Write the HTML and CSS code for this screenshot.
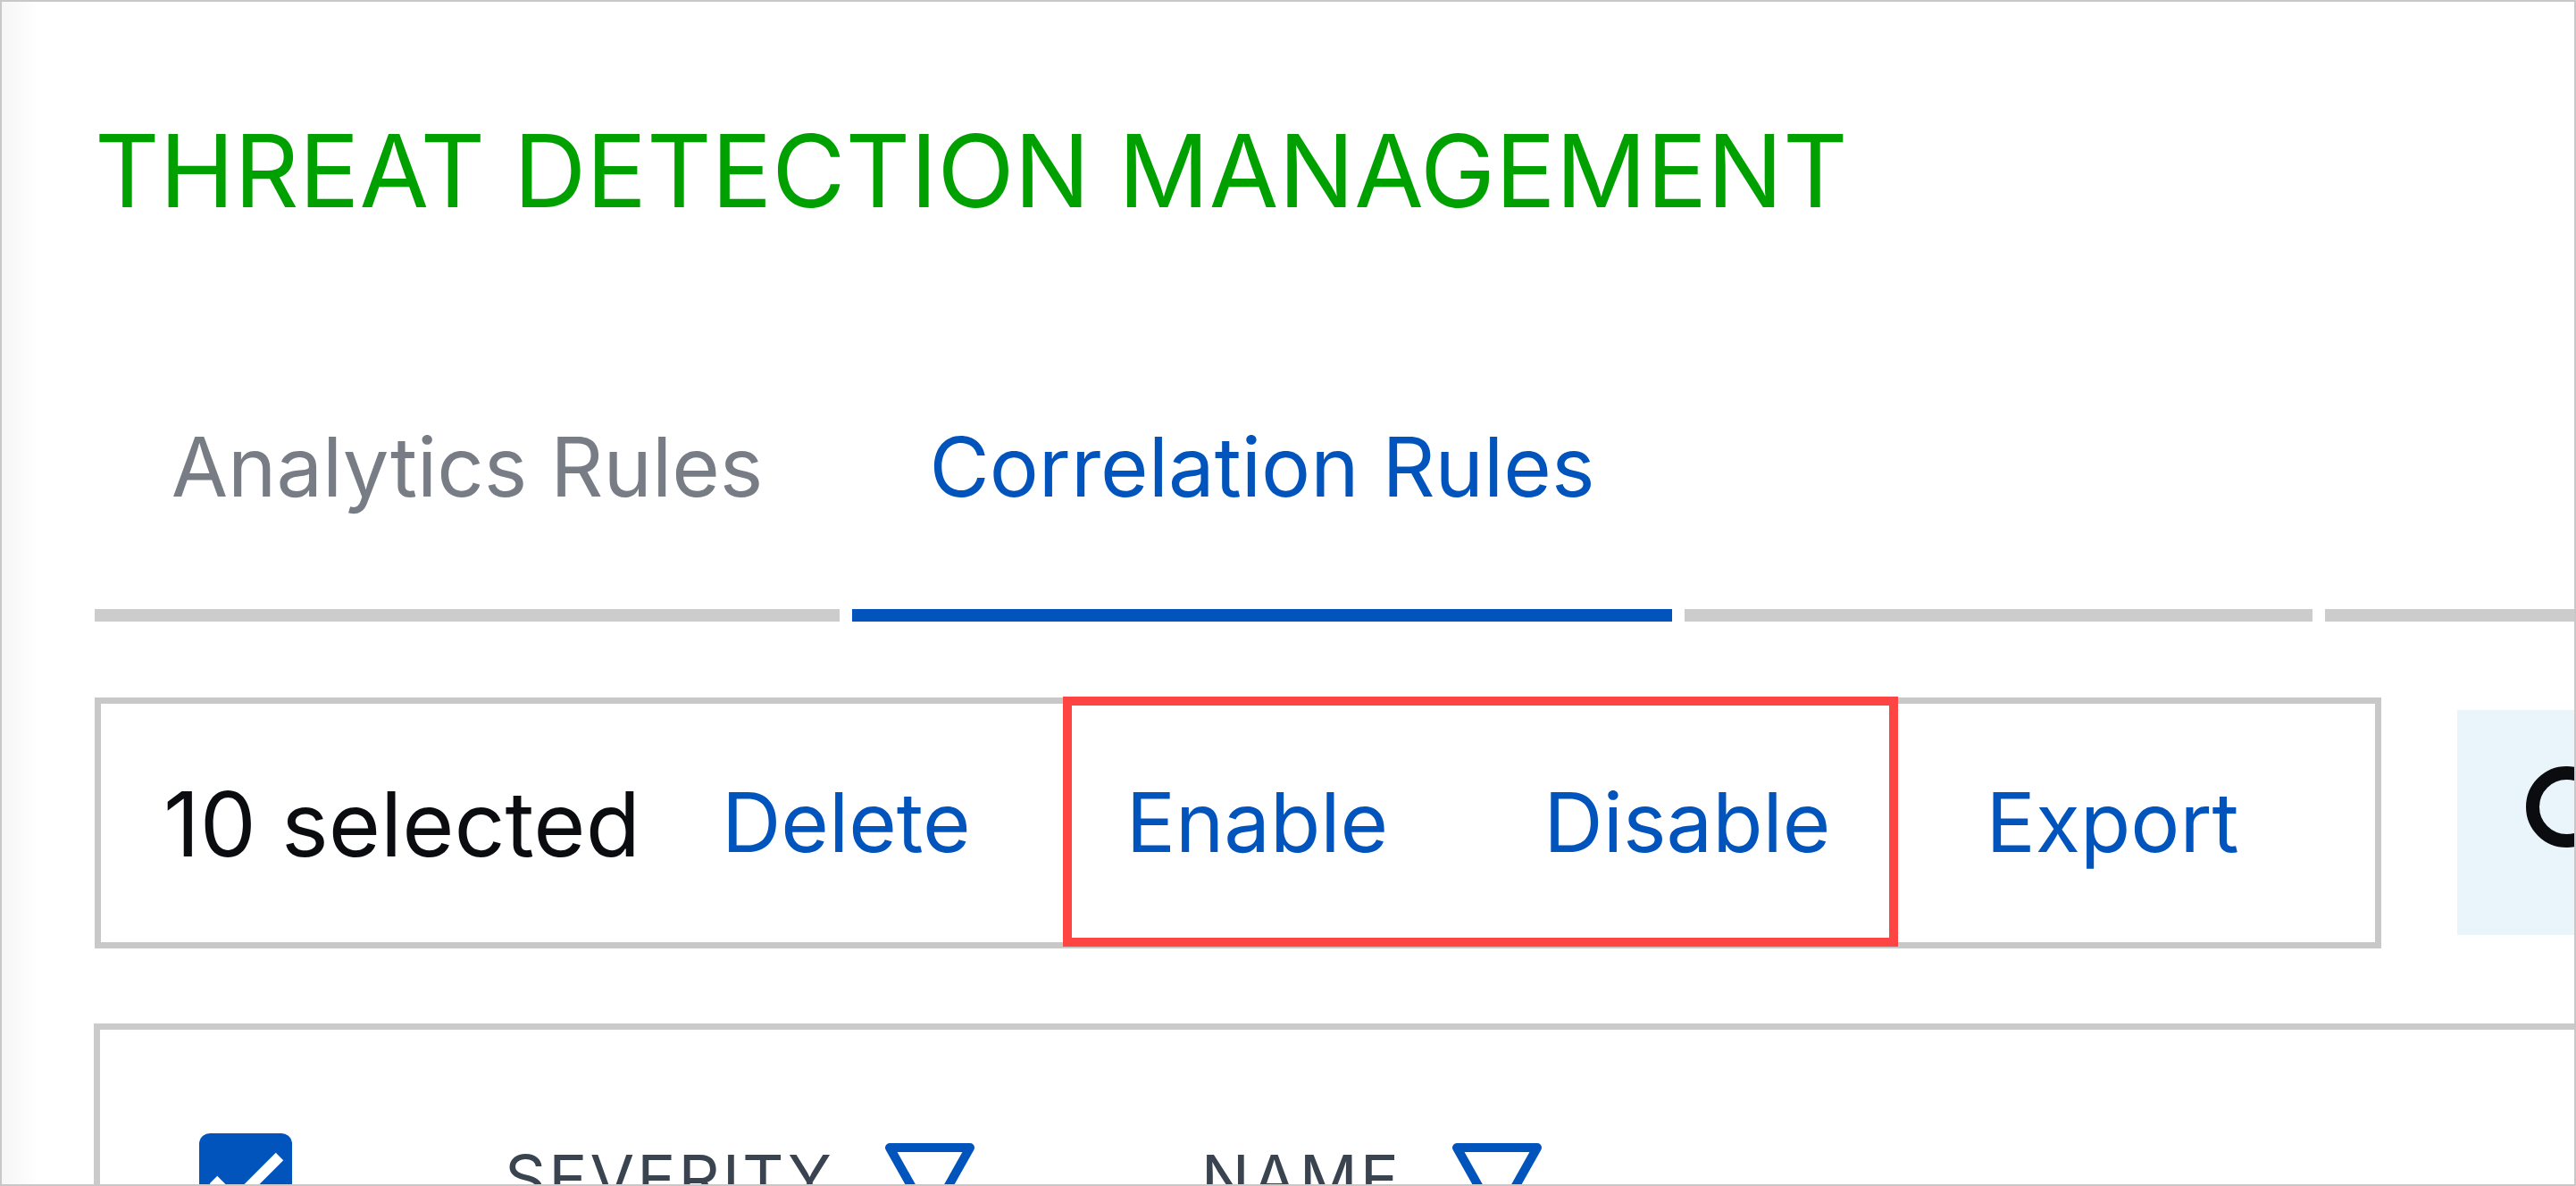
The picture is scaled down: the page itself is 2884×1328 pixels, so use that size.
FILE: index.html
```html
<!DOCTYPE html>
<html lang="en">
<head>
    <meta charset="UTF-8">
    <meta name="viewport" content="width=device-width, initial-scale=1.0">
    <title>Threat Detection Management</title>
    <link rel="stylesheet" href="styles.css">
</head>
<body>
    <div class="frame">
        <h1 class="title">THREAT DETECTION MANAGEMENT</h1>

        <nav class="tabs">
            <div class="tab tab-analytics">Analytics Rules</div>
            <div class="tab tab-correlation active">Correlation Rules</div>
            <div class="tab tab-blank"></div>
            <div class="tab tab-rest"></div>
        </nav>

        <div class="toolbar">
            <div class="bulk">
                <span class="count">10 selected</span>
                <button class="act">Delete</button>
                <button class="act">Enable</button>
                <button class="act">Disable</button>
                <button class="act">Export</button>
            </div>
            <div class="highlight"></div>
            <div class="search">
                <svg class="search-icon" width="130" height="130" viewBox="0 0 130 130">
                    <circle cx="45.5" cy="45.5" r="38" fill="none" stroke="#0b0c10" stroke-width="15"/>
                    <line x1="74" y1="74" x2="118" y2="118" stroke="#0b0c10" stroke-width="15" stroke-linecap="round"/>
                </svg>
            </div>
        </div>

        <div class="table">
            <div class="thead">
                <span class="check">
                    <svg width="104" height="104" viewBox="0 0 104 104">
                        <path d="M16 52 L40 76 L90 26" fill="none" stroke="#fff" stroke-width="12"/>
                    </svg>
                </span>
                <span class="col col-severity">SEVERITY</span>
                <svg class="funnel" width="102" height="92" viewBox="0 0 102 92">
                    <path d="M6 6 H96 L51 86 Z" fill="none" stroke="#0254bd" stroke-width="10" stroke-linejoin="round"/>
                </svg>
                <span class="col col-name">NAME</span>
                <svg class="funnel" width="102" height="92" viewBox="0 0 102 92">
                    <path d="M6 6 H96 L51 86 Z" fill="none" stroke="#0254bd" stroke-width="10" stroke-linejoin="round"/>
                </svg>
            </div>
        </div>
    </div>
</body>
</html>
```

FILE: styles.css
```css
body {
    margin: 0;
    overflow: hidden;
    font-family: Inter, "Noto Sans", sans-serif;
    background: #fff;
}
.frame {
    width: 2884px;
    height: 1328px;
    box-sizing: border-box;
    border: 2px solid #c8c8c8;
    padding-left: 104px;
    overflow: hidden;
    background: linear-gradient(to right, #f6f6f6, #fff 40px);
}
.title {
    margin: 0;
    padding-top: 133px;
    font-size: 112.6px;
    line-height: 1;
    font-weight: 400;
    color: #00a000;
    white-space: nowrap;
}
.tabs {
    display: flex;
    gap: 14px;
    margin-top: 229px;
}
.tab {
    flex: none;
    font-size: 92px;
    line-height: 1;
    height: 92px;
    text-align: center;
    white-space: nowrap;
    color: #787c85;
    padding-bottom: 113px;
    border-bottom: 14px solid #cccccc;
}
.tab.active {
    color: #0254bd;
    border-bottom-color: #0254bd;
}
.tab-analytics { width: 834px; }
.tab-correlation { width: 918px; }
.tab-blank { width: 703px; }
.tab-rest { flex: 1; }

.toolbar {
    position: relative;
    display: flex;
    align-items: center;
    margin-top: 85px;
}
.bulk {
    flex: none;
    width: 2560px;
    height: 281px;
    box-sizing: border-box;
    border: 7px solid #c8c8c8;
    display: flex;
    align-items: center;
    padding-left: 70px;
}
.count {
    font-size: 100px;
    line-height: 1;
    color: #0b0c10;
    margin-right: 4px;
    margin-top: 4px;
}
.act {
    font-family: inherit;
    font-size: 92px;
    line-height: 1;
    color: #0254bd;
    background: none;
    border: 0;
    padding: 0 87px;
    cursor: pointer;
}
.highlight {
    position: absolute;
    left: 1084px;
    top: -1px;
    width: 935px;
    height: 280px;
    box-sizing: border-box;
    border: 10px solid #ff4444;
    pointer-events: none;
}
.search {
    flex: none;
    margin-left: 85px;
    width: 200px;
    height: 252px;
    background: #eaf4fb;
}
.search-icon {
    display: block;
    margin: 63px 0 0 77px;
}

.table {
    margin-top: 84px;
    margin-left: -1px;
    height: 300px;
    border: 7px solid #cacaca;
    border-right: none;
}
.thead {
    display: flex;
    align-items: flex-start;
    padding: 116px 0 0 111px;
}
.check {
    flex: none;
    width: 104px;
    height: 104px;
    border-radius: 12px;
    background: #0254bd;
}
.check svg {
    display: block;
}
.col {
    font-size: 72px;
    line-height: 1;
    letter-spacing: 3px;
    color: #3a4450;
    margin-top: 14px;
}
.col-severity {
    margin-left: 238px;
}
.col-name {
    margin-left: 253px;
}
.funnel {
    flex: none;
    margin-top: 10px;
    margin-left: 56px;
}
```
